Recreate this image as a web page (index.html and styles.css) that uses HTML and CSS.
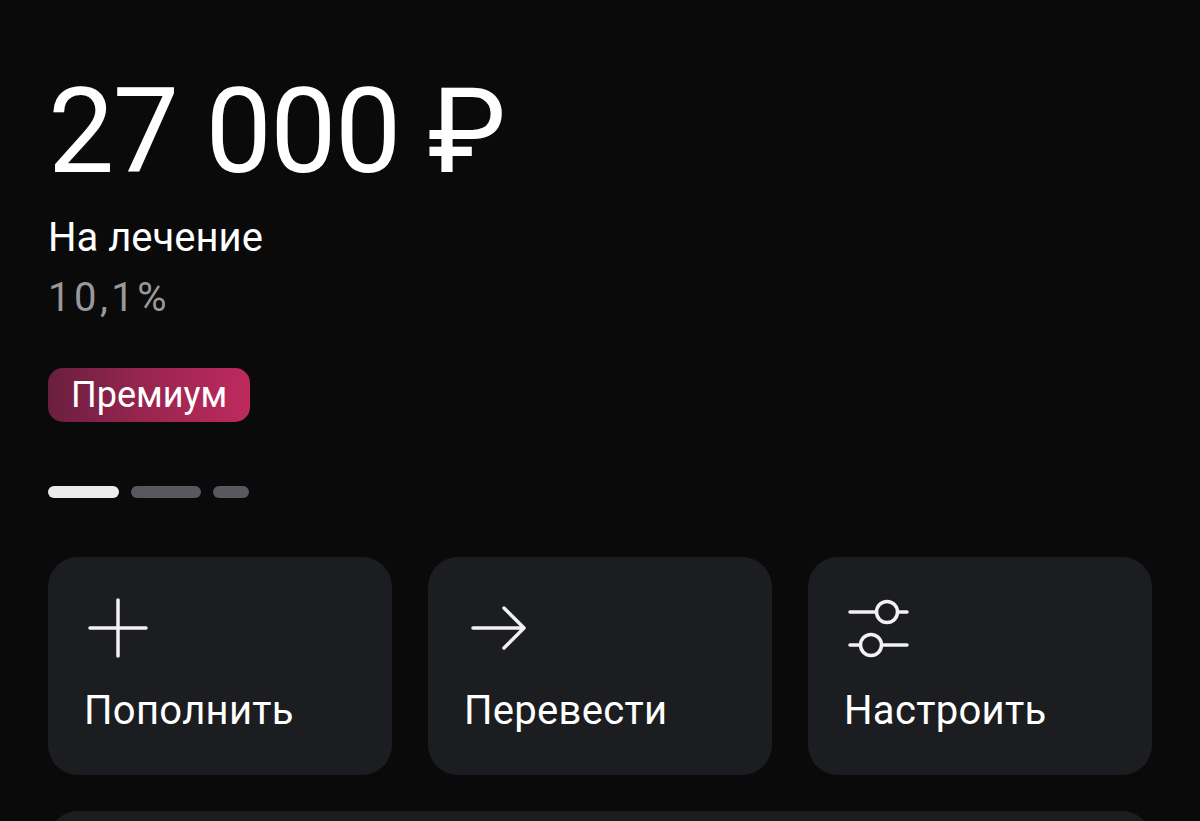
FILE: index.html
```html
<!DOCTYPE html>
<html lang="ru">
<head>
<meta charset="utf-8">
<link rel="stylesheet" href="styles.css">
</head>
<body>
<main class="page">
  <div class="amount">27 000 ₽</div>
  <div class="title">На лечение</div>
  <div class="percent">10,1%</div>
  <div class="badge">Премиум</div>
  <div class="dots">
    <span class="dot dot-active"></span>
    <span class="dot dot-mid"></span>
    <span class="dot dot-small"></span>
  </div>
  <div class="actions">
    <div class="card">
      <svg class="icon" width="68" height="64" viewBox="0 0 68 64">
        <path d="M34 4V60M6 32H62" stroke="#f2f2f2" stroke-width="3.5" stroke-linecap="round" fill="none"/>
      </svg>
      <div class="label">Пополнить</div>
    </div>
    <div class="card">
      <svg class="icon" width="68" height="64" viewBox="0 0 68 64">
        <path d="M9 32H59M40 12L60 32L40 52" stroke="#f2f2f2" stroke-width="3.5" stroke-linecap="round" stroke-linejoin="round" fill="none"/>
      </svg>
      <div class="label">Перевести</div>
    </div>
    <div class="card">
      <svg class="icon" width="68" height="64" viewBox="0 0 68 64">
        <g stroke="#f2f2f2" stroke-width="3.5" stroke-linecap="round" fill="none">
          <path d="M6 16H32M54 16H63"/>
          <circle cx="43" cy="16" r="10.5"/>
          <path d="M6 49H16M38 49H63"/>
          <circle cx="27" cy="49" r="10.5"/>
        </g>
      </svg>
      <div class="label">Настроить</div>
    </div>
  </div>
  <div class="wide-card"></div>
</main>
</body>
</html>
```
FILE: styles.css
```css
* { box-sizing: border-box; }
html, body {
  margin: 0;
  background: #0a0a0a;
  overflow: hidden;
}
body {
  height: 821px;
  font-family: Roboto, "Noto Sans", "Liberation Sans", sans-serif;
  color: #ffffff;
}
.page {
  padding: 73px 48px 0;
  display: flex;
  flex-direction: column;
}
.amount {
  font-size: 118px;
  line-height: 118px;
  letter-spacing: -1.5px;
  white-space: nowrap;
}
.title {
  margin-top: 23px;
  font-size: 40px;
  line-height: 48px;
}
.percent {
  margin-top: 12px;
  font-size: 40px;
  line-height: 48px;
  letter-spacing: 3.5px;
  color: #98989d;
}
.badge {
  margin-top: 46px;
  align-self: flex-start;
  height: 54px;
  padding: 0 23px;
  border-radius: 15px;
  background: linear-gradient(90deg, #6a1f3f 0%, #9a2550 50%, #be2a5d 100%);
  font-size: 36px;
  line-height: 54px;
}
.dots {
  margin-top: 64px;
  display: flex;
  gap: 12px;
}
.dot {
  height: 12px;
  border-radius: 6px;
  background: #58585e;
}
.dot-active { width: 71px; background: #ececec; }
.dot-mid { width: 70px; }
.dot-small { width: 36px; }
.actions {
  margin-top: 59px;
  display: grid;
  grid-template-columns: repeat(3, 1fr);
  gap: 36px;
}
.card {
  height: 218px;
  border-radius: 30px;
  background: #1c1d21;
  padding: 39px 0 0 36px;
  display: flex;
  flex-direction: column;
}
.icon { display: block; }
.label {
  margin-top: 27px;
  font-size: 40px;
  line-height: 48px;
  letter-spacing: 0.3px;
  white-space: nowrap;
}
.wide-card {
  margin-top: 36px;
  height: 200px;
  border-radius: 30px;
  background: #1c1d21;
}
```
